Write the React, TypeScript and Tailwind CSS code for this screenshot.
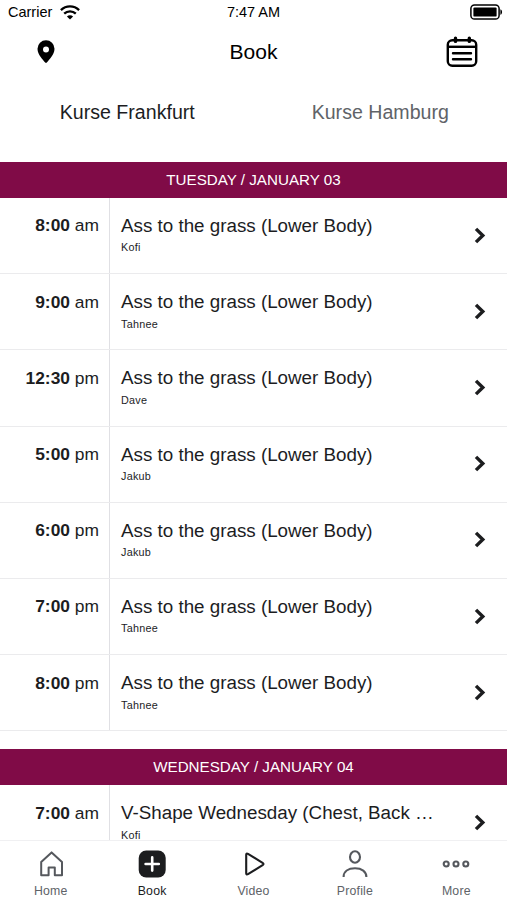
import type { ReactNode } from 'react';

type Course = {
  time: string;
  period: string;
  title: string;
  coach: string;
};

type Day = {
  label: string;
  courses: Course[];
};

const LOWER_BODY = 'Ass to the grass (Lower Body)';

const DAYS: Day[] = [
  {
    label: 'TUESDAY / JANUARY 03',
    courses: [
      { time: '8:00', period: 'am', title: LOWER_BODY, coach: 'Kofi' },
      { time: '9:00', period: 'am', title: LOWER_BODY, coach: 'Tahnee' },
      { time: '12:30', period: 'pm', title: LOWER_BODY, coach: 'Dave' },
      { time: '5:00', period: 'pm', title: LOWER_BODY, coach: 'Jakub' },
      { time: '6:00', period: 'pm', title: LOWER_BODY, coach: 'Jakub' },
      { time: '7:00', period: 'pm', title: LOWER_BODY, coach: 'Tahnee' },
      { time: '8:00', period: 'pm', title: LOWER_BODY, coach: 'Tahnee' },
    ],
  },
  {
    label: 'WEDNESDAY / JANUARY 04',
    courses: [
      { time: '7:00', period: 'am', title: 'V-Shape Wednesday (Chest, Back …', coach: 'Kofi' },
    ],
  },
];

function WifiIcon() {
  return (
    <svg width="20" height="15" viewBox="0 0 20 15" fill="none" stroke="#000" strokeWidth="2.3">
      <path d="M0.9 5.1C6 0.1 14 0.1 19.1 5.1" />
      <path d="M4.2 8.6C7.4 5.5 12.6 5.5 15.8 8.6" />
      <path d="M10 14.6 6.9 11.5C8.6 9.9 11.4 9.9 13.1 11.5Z" fill="#000" stroke="none" />
    </svg>
  );
}

function BatteryIcon() {
  return (
    <svg width="33" height="16" viewBox="0 0 33 16">
      <rect x="0.9" y="0.9" width="28.2" height="14.2" rx="3.6" fill="none" stroke="#000" strokeWidth="1.5" />
      <rect x="3.4" y="3.4" width="23.2" height="9.2" rx="1.2" fill="#000" />
      <path d="M30.4 5.2C32.6 6 32.6 10 30.4 10.8Z" fill="#000" />
    </svg>
  );
}

function PinIcon() {
  return (
    <svg width="18" height="24" viewBox="0 0 18 24">
      <path
        fillRule="evenodd"
        d="M9 0.3A8.5 8.5 0 0 0 0.5 8.8C0.5 14.6 6 20 8.2 22.6Q9 23.5 9.8 22.6C12 20 17.5 14.6 17.5 8.8A8.5 8.5 0 0 0 9 0.3ZM9 6.5A3 3 0 1 1 9 12.5A3 3 0 1 1 9 6.5Z"
      />
    </svg>
  );
}

function CalendarIcon() {
  return (
    <svg width="32" height="32" viewBox="0 0 32 32" fill="none" stroke="#000" strokeWidth="2.4" strokeLinecap="round">
      <rect x="1.8" y="4.3" width="28.4" height="25.5" rx="4.5" />
      <path d="M2 10.8H30" strokeLinecap="butt" />
      <path d="M9.5 2.3V5.4M23.3 2.3V5.4" strokeWidth="3.4" />
      <path d="M7 17.2H25M7 23.3H25" />
    </svg>
  );
}

function ChevronIcon() {
  return (
    <svg width="12" height="17" viewBox="0 0 12 17" fill="none" stroke="#1c1d1f" strokeWidth="3.4">
      <path d="M2 1.9 8.8 8.5 2 15.1" />
    </svg>
  );
}

function HomeIcon() {
  return (
    <svg width="28" height="28" viewBox="0 0 28 28" fill="none" stroke="#55585d" strokeWidth="2" strokeLinejoin="round">
      <path d="M4.2 11.9 14.6 2.4 25 11.9V25.3H17.8V17.4H11.6V25.3H4.2Z" />
    </svg>
  );
}

function BookIcon() {
  return (
    <svg width="28" height="28" viewBox="0 0 28 28">
      <rect x="0.7" y="0.5" width="27" height="27" rx="7.5" fill="#1c1d1f" />
      <path d="M14.2 7.4V20.6M7.6 14H20.8" stroke="#fff" strokeWidth="2.6" strokeLinecap="round" />
    </svg>
  );
}

function VideoIcon() {
  return (
    <svg width="28" height="28" viewBox="0 0 28 28" fill="none" stroke="#1c1d1f" strokeWidth="2.1" strokeLinejoin="round">
      <path d="M6.2 4.8Q6.2 2.8 8 3.8L23 13.2Q24 14 23 14.8L8 24.200Q6.200 25.200 6.200 23.200Z" />
    </svg>
  );
}

function ProfileIcon() {
  return (
    <svg width="28" height="28" viewBox="0 0 28 28" fill="none" stroke="#55585d" strokeWidth="2.1">
      <ellipse cx="14" cy="7" rx="5" ry="5.7" />
      <path d="M2.6 27C2.600 21.500 7.200 18.300 14 18.300S25.400 21.500 25.400 27" />
    </svg>
  );
}

function MoreIcon() {
  return (
    <svg width="28" height="28" viewBox="0 0 28 28" fill="none" stroke="#55585d" strokeWidth="2.1">
      <circle cx="4.2" cy="14" r="2.5" />
      <circle cx="14" cy="14" r="2.5" />
      <circle cx="23.8" cy="14" r="2.5" />
    </svg>
  );
}

type TabProps = {
  label: string;
  icon: ReactNode;
  active?: boolean;
};

function Tab({ label, icon, active }: TabProps) {
  return (
    <button className="flex flex-1 flex-col items-center pt-[9px]">
      {icon}
      <span
        className={`mt-[5px] text-[12.3px] leading-4 tracking-[0.2px] ${active ? 'text-[#1c1d1f]' : 'text-[#606368]'}`}
      >
        {label}
      </span>
    </button>
  );
}

function CourseRow({ course }: { course: Course }) {
  return (
    <div className="flex h-[76.2px] shrink-0 border-b border-[#ebebed] text-[#1c1d1f]">
      <div className="w-[110px] shrink-0 border-r border-[#e0e0e4] pt-[16.4px] pr-[10px] text-right text-[17.4px] leading-[22px]">
        <b>{course.time}</b> {course.period}
      </div>
      <div className="min-w-0 flex-1 pt-[17px] pl-[11px]">
        <div className="text-[18.8px] leading-[22px] whitespace-nowrap">{course.title}</div>
        <div className="mt-[3.4px] text-[10.8px] leading-[14px] tracking-[0.25px]">{course.coach}</div>
      </div>
      <div className="flex w-[33px] shrink-0 items-center pb-px">
        <ChevronIcon />
      </div>
    </div>
  );
}

export default function App() {
  return (
    <div className="flex h-[900px] w-[507px] flex-col overflow-hidden bg-white font-['Liberation_Sans',Arial,sans-serif] text-black">
      <div className="flex h-6 shrink-0 items-center justify-between pr-[4px] pl-[8px] text-[14.5px] leading-6">
        <div className="flex flex-1 items-center gap-2">
          Carrier
          <WifiIcon />
        </div>
        <div className="pr-1 text-center">7:47 AM</div>
        <div className="flex flex-1 justify-end">
          <BatteryIcon />
        </div>
      </div>

      <header className="flex h-14 shrink-0 items-center pr-[29px] pl-[37px]">
        <div className="flex-1">
          <PinIcon />
        </div>
        <h1 className="pr-[8px] text-center text-[21px] leading-6">Book</h1>
        <div className="flex flex-1 justify-end">
          <CalendarIcon />
        </div>
      </header>

      <nav className="grid h-[82px] shrink-0 grid-cols-2 pt-[20px] text-center text-[19.6px] leading-6">
        <button className="h-6 pl-px text-[#1c1d1f]">Kurse Frankfurt</button>
        <button className="h-6 text-[#606368]">Kurse Hamburg</button>
      </nav>

      <main className="flex min-h-0 flex-1 flex-col gap-[18px] overflow-hidden">
        {DAYS.map((day) => (
          <section key={day.label} className="shrink-0">
            <h2 className="h-9 bg-[#800b47] text-center text-[15.2px] leading-9 text-white">{day.label}</h2>
            {day.courses.map((course, i) => (
              <CourseRow key={i} course={course} />
            ))}
          </section>
        ))}
      </main>

      <footer className="flex h-[60px] shrink-0 border-t border-[#f0f0f2] bg-white">
        <Tab label="Home" icon={<HomeIcon />} />
        <Tab label="Book" icon={<BookIcon />} active />
        <Tab label="Video" icon={<VideoIcon />} />
        <Tab label="Profile" icon={<ProfileIcon />} />
        <Tab label="More" icon={<MoreIcon />} />
      </footer>
    </div>
  );
}
